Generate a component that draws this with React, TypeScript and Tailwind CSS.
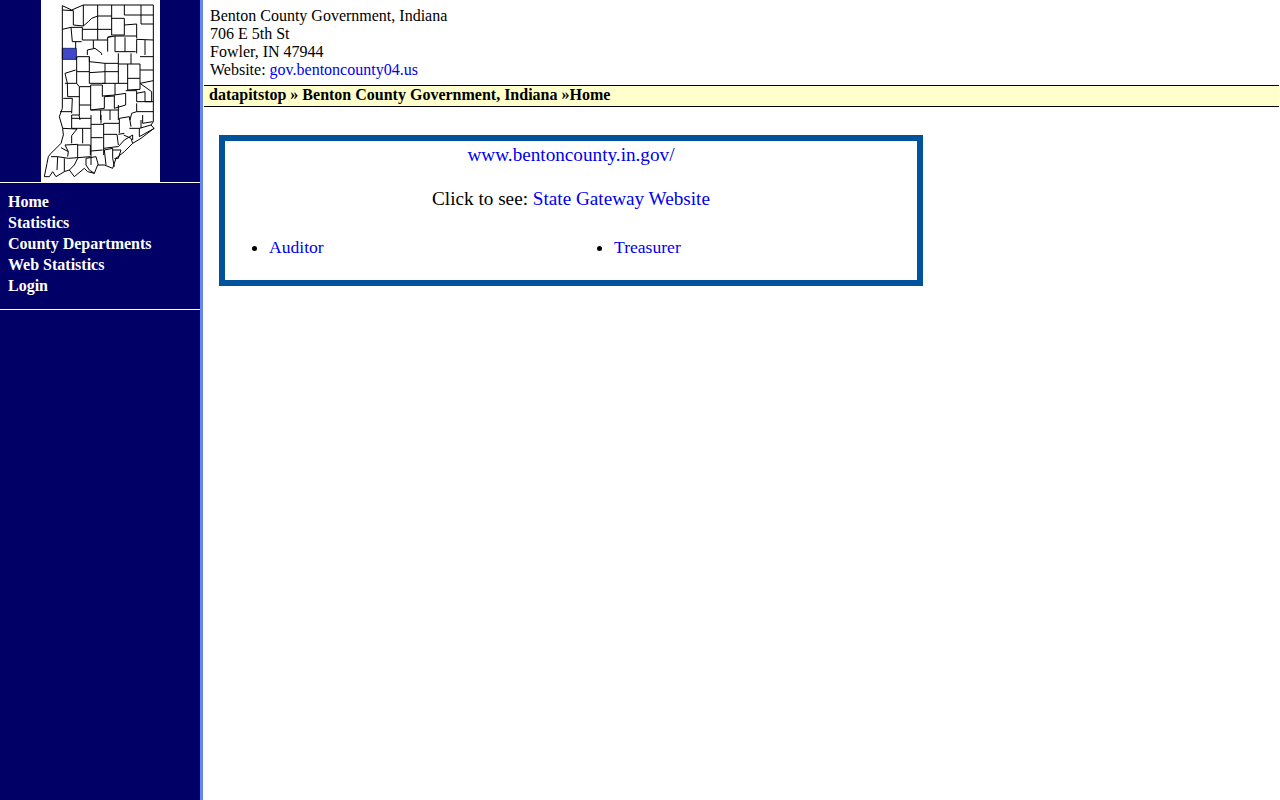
const navItems = ["Home", "Statistics", "County Departments", "Web Statistics", "Login"];

function IndianaMap() {
  return (
    <svg viewBox="123 0 357 546" width="119" height="182" className="block" fill="none" stroke="#000" strokeWidth="3" strokeLinejoin="round">
      <path fill="#3f48c8" stroke="#1c2a80" d="M187 145H229V178H187Z" />
      {/* state outline */}
      <path d="M187 17L215 30L250 15H460V365L453 375L462 385L423 415L398 430L373 455L348 475L338 505L313 495L293 495L283 520L263 515L253 505L223 530L208 510L193 515L168 530L158 515L148 530L133 530L141 490L145 470L153 460L183 430L190 405L188 385L178 350L187 325Z" />
      {/* north counties */}
      <g transform="translate(165 0)">
        <path d="M22 30L55 32V75L85 78L100 65L110 55L128 48H170M85 15V78M128 15V120M170 15V105H208M170 55H208V105M208 15V45H295M258 15V72M258 72H295M208 75L245 72V115M245 118L295 120" />
        <path d="M22 88L48 82L52 125H80M48 82H82V120M82 88H170M82 120H158M170 108L158 112V155M158 112L180 108V155H242M210 112V155M180 108H245M270 120V165M245 118V160M62 125V145M97 150L120 145L140 160V165M97 150V165M115 120V145" />
      </g>
      {/* middle counties */}
      <g transform="translate(165 150)">
        <path d="M63 28L67 20H103V35L150 40V65L103 68V20M65 20V100M65 65H103M103 68V100H150V65M150 40H190M190 10V100M150 65H190M190 42H228V10M228 42H255V85M255 20H295M255 60H295M255 100L295 92M218 42V120M218 85H255V118L218 120M180 100H218" />
        <path d="M107 105H142V140M142 100H180V135L142 138M107 105V180M73 110H107M73 110V165H107M30 70L62 60M30 100H65L73 110M30 70L37 100L38 140H73M25 145H52L50 190M73 165V195H50M15 185H50M107 180L148 175V140M148 140L178 138V175M178 135L212 130V165L178 175M212 122H245V155M245 130L270 125V155H290V125L255 100M245 155H295M245 160V185H295M245 185L230 190L225 210M107 180H190M137 180V210M165 180V210M190 165V210M72 195L75 210" />
      </g>
      {/* south counties */}
      <g transform="translate(123 345)">
        <path d="M92 0V40M92 10H150M150 0V150M150 28H188M150 68H185M150 108L185 105M188 25V120M125 40V85M92 40H150M65 40L108 42L92 62V85M72 90L110 88V130M110 90H148V120M110 128L148 125M72 90L82 110L80 125M60 98L82 110M30 125H50L48 165M50 125L82 130L110 128M70 130V170M110 130L100 150L85 165" />
        <path d="M135 130L165 125L172 150M135 130V150L145 165L160 175M190 105L215 100V130L220 155M190 105L195 150M215 105H240L232 130H220M188 58H228L232 90M188 100L228 95H232L250 75L275 60V75M232 58L250 55M188 25H235V55M235 10L265 5L270 35M248 60L270 70L275 85M265 40H295V65L340 40M295 40L330 30M300 15V40M305 0V25L335 20M180 0V25M235 10V25" />
      </g>
    </svg>
  );
}

export default function App() {
  return (
    <div className="flex min-h-screen bg-white font-['Liberation_Serif',serif] text-base leading-[18px] text-black">
      <aside className="w-[203px] shrink-0 border-r-[3px] border-[#6688ee] bg-[#000066] font-bold text-white">
        <div className="flex justify-center border-b border-white">
          <div className="ml-px bg-white">
            <IndianaMap />
          </div>
        </div>
        <nav className="border-b border-white pt-[8px] pb-[13px] pl-2 leading-[21px]">
          {navItems.map((item) => (
            <a key={item} href="#" className="block">{item}</a>
          ))}
        </nav>
      </aside>

      <main className="min-w-0 flex-1 pl-px pr-px">
        <div className="h-[85px] px-[6px] pt-[7px]">
          <div>Benton County Government, Indiana</div>
          <div>706 E 5th St</div>
          <div>Fowler, IN 47944</div>
          <div>Website: <a href="#" className="text-[#0000ee]">gov.bentoncounty04.us</a></div>
        </div>
        <div className="h-[22px] border-y border-black bg-[#ffffcc] pl-[5px] leading-[18px] font-bold">
          datapitstop » Benton County Government, Indiana »Home
        </div>

        <section className="mt-[28px] ml-[15px] w-[704px] border-[6px] border-[#00529b] text-[19.2px] leading-[22px]">
          <div className="pt-[3px] text-center">
            <a href="#" className="text-[#0000ee]">www.bentoncounty.in.gov/</a>
          </div>
          <div className="mt-[22px] text-center">
            Click to see: <a href="#" className="text-[#0000ee]">State Gateway Website</a>
          </div>
          <div className="mt-[26px] mb-[22px] grid grid-cols-2 text-[17.6px]">
            <ul className="list-disc pl-[44px]">
              <li><a href="#" className="text-[#0000ee]">Auditor</a></li>
            </ul>
            <ul className="list-disc pl-[43px]">
              <li><a href="#" className="text-[#0000ee]">Treasurer</a></li>
            </ul>
          </div>
        </section>
      </main>
    </div>
  );
}
